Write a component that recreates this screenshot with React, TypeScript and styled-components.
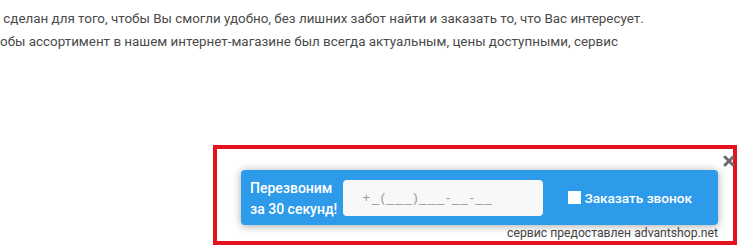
import React from "react";
import styled, { createGlobalStyle } from "styled-components";

const Global = createGlobalStyle`
  html, body { margin: 0; padding: 0; background: #fff; }
  body { font-family: Roboto, "Noto Sans", Arial, sans-serif; }
  * { box-sizing: border-box; }
`;

const Page = styled.div`
  width: 740px;
  height: 251px;
  overflow: hidden;
  display: flex;
  flex-direction: column;
  background: #fff;
`;

const Text = styled.div`
  padding-top: 7px;
  color: #4a4a4a;
  font-size: 13.4px;
  line-height: 23px;
  white-space: nowrap;
`;

const Line = styled.div<{ $indent?: number }>`
  padding-left: ${(p) => p.$indent ?? 0}px;
`;

const Frame = styled.div`
  position: relative;
  margin: 92px 0 0 213px;
  width: 524px;
  height: 100px;
  border: 4px solid #e5121d;
  padding: 21px 15px 0 24px;
  display: flex;
  flex-direction: column;
  align-items: flex-end;
`;

const Panel = styled.div`
  width: 477px;
  height: 57px;
  background: #2e9bea;
  border-radius: 4px;
  box-shadow: 0 1px 8px rgba(0, 0, 0, 0.35);
  display: flex;
  align-items: center;
  padding: 0 26px 0 9px;
`;

const Label = styled.div`
  color: #fff;
  font-size: 14px;
  line-height: 21px;
  font-weight: 500;
  white-space: nowrap;
  flex-shrink: 0;
  margin-top: 2px;
`;

const Phone = styled.input`
  width: 200px;
  height: 36px;
  margin-left: 6px;
  flex-shrink: 0;
  border: none;
  outline: none;
  border-radius: 4px;
  background: #f8f8f8;
  padding: 0 0 0 19px;
  font-family: "Liberation Sans", Arial, sans-serif;
  font-size: 13.5px;
  letter-spacing: 1.4px;
  color: #888;
  &::placeholder { color: #9a9a9a; }
`;

const Order = styled.label`
  display: flex;
  align-items: center;
  margin-left: auto;
  color: #fff;
  font-size: 13.6px;
  font-weight: 500;
  white-space: nowrap;
  cursor: pointer;
`;

const Box = styled.span`
  width: 13px;
  height: 13px;
  background: #fff;
  margin-right: 3px;
  display: inline-block;
`;

const Credit = styled.div`
  margin-top: 1px;
  font-size: 12.2px;
  line-height: 15px;
  color: #444;
`;

const Close = styled.button`
  position: absolute;
  top: 6px;
  right: -2px;
  width: 12px;
  height: 12px;
  padding: 0;
  border: none;
  background: transparent;
  display: flex;
  cursor: pointer;
`;

export default function App() {
  return (
    <>
      <Global />
      <Page>
        <Text>
          <Line $indent={0}>&nbsp;сделан для того, чтобы Вы смогли удобно, без лишних забот найти и заказать то, что Вас интересует.</Line>
          <Line>обы ассортимент в нашем интернет-магазине был всегда актуальным, цены доступными, сервис</Line>
        </Text>
        <Frame>
          <Panel>
            <Label>
              Перезвоним
              <br />
              за 30 секунд!
            </Label>
            <Phone placeholder="+_(___)___-__-__" />
            <Order>
              <Box />
              Заказать звонок
            </Order>
          </Panel>
          <Credit>сервис предоставлен advantshop.net</Credit>
          <Close aria-label="Закрыть">
            <svg width="12" height="12" viewBox="0 0 12 12">
              <path d="M2 2 L10 10 M10 2 L2 10" stroke="#6b6b6b" strokeWidth="3" strokeLinecap="round" />
            </svg>
          </Close>
        </Frame>
      </Page>
    </>
  );
}
